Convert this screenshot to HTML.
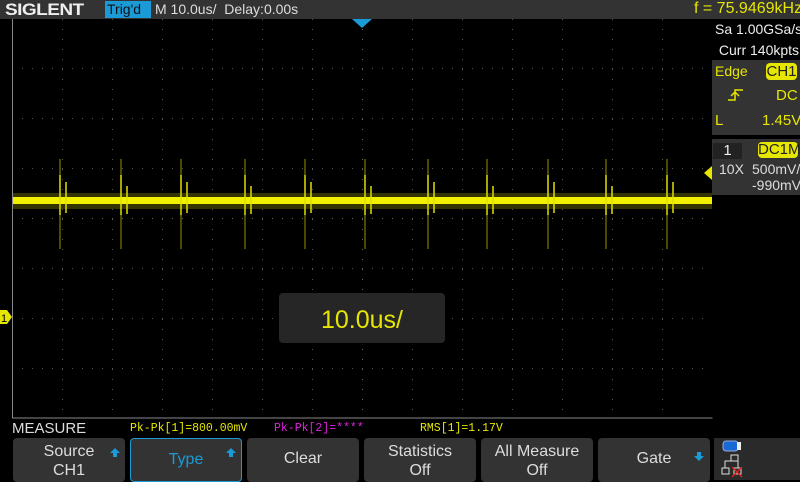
<!DOCTYPE html>
<html><head><style>
body{margin:0;width:800px;height:480px;background:#000;overflow:hidden;position:relative;font-family:"Liberation Sans",sans-serif}
.a{position:absolute;white-space:nowrap}
.btn{position:absolute;top:438px;height:44px;width:112px;background:#333;border-radius:4px;color:#ddd;font-size:16px;text-align:center;line-height:19px;box-sizing:border-box}
</style></head><body>
<div class="a" style="left:0;top:0;width:800px;height:19px;background:#333"></div>
<div class="a" style="left:5px;top:0px;font-size:17px;font-weight:bold;color:#eee;letter-spacing:-0.5px;transform:scaleX(1.12);transform-origin:left">SIGLENT</div>
<div class="a" style="left:105px;top:1px;width:44px;height:17px;background:#1a9ad6;color:#111;font-size:14px;line-height:17px;padding-left:2px">Trig'd</div>
<div class="a" style="left:155px;top:1px;color:#ddd;font-size:14px">M 10.0us/&nbsp; Delay:0.00s</div>
<div class="a" style="left:694px;top:0px;color:#e6e600;font-size:16px">f = 75.9469kHz</div>
<svg class="a" style="left:0;top:0" width="800" height="480">
<g stroke="#555" stroke-width="1" stroke-dasharray="1 9">
<path d="M62.5 19V418M112.5 19V418M162.5 19V418M212.5 19V418M262.5 19V418M312.5 19V418M412.5 19V418M462.5 19V418M512.5 19V418M562.5 19V418M612.5 19V418M662.5 19V418"/>
<path d="M12 68.5H712M12 118.5H712M12 168.5H712M12 268.5H712M12 318.5H712M12 368.5H712"/>
</g>
<g stroke="#666" stroke-dasharray="1 9"><path d="M362.5 19V418M12 218.5H712"/></g>
<path d="M12.5 19V418H712.5" stroke="#888" fill="none"/>
<path d="M352 19h20l-10 9z" fill="#1a9ad6"/>
<path d="M0 310h7l5 7-5 7H0z" fill="#e6e600"/>
<text x="1" y="322" font-size="11" fill="#000" font-family="Liberation Sans">1</text>
<path d="M712 166l-8 7 8 7z" fill="#e6e600"/>
<rect x="13" y="193" width="699" height="16" fill="#4a4a00" opacity="0.7"/>
<rect x="13" y="197" width="699" height="7" fill="#f0f000"/>
<g stroke="#b8b800" stroke-width="0.8">
<path d="M60 159V249M121 159V249M181 159V249M245 159V249M305 159V249M365 159V249M428 159V249M487 159V249M548 159V249M606 159V249M667 159V249"/>
</g>
<g stroke="#e0e000" stroke-width="1.5">
<path d="M60 175V215M66 182V213M121 175V215M127 186V214M181 175V215M187 182V213M245 175V215M251 186V214M305 175V215M311 182V213M365 175V215M371 186V214M428 175V215M434 182V213M487 175V215M493 186V214M548 175V215M554 182V213M606 175V215M612 186V214M667 175V215M673 182V213"/>
</g>
<rect x="279" y="293" width="166" height="50" rx="4" fill="#262626"/>
<text x="362" y="328" text-anchor="middle" font-size="25" fill="#e6e600" font-family="Liberation Sans">10.0us/</text>
</svg>
<div class="a" style="left:713px;top:19px;width:87px;height:40px;background:#000;color:#eee;font-size:14px;line-height:21px;padding-left:2px">Sa 1.00GSa/s<br>&nbsp;Curr 140kpts</div>
<div class="a" style="left:712px;top:60px;width:88px;height:75px;background:#333"></div>
<div class="a" style="left:715px;top:63px;color:#e6e600;font-size:14px">Edge</div>
<div class="a" style="left:766px;top:63px;width:31px;height:17px;background:#e6e600;color:#222;font-size:15px;line-height:17px;text-align:center;border-radius:4px">CH1</div>
<svg class="a" style="left:728px;top:88px" width="16" height="14"><path d="M0 12H7V2H15M3 8l4-4 4 4" stroke="#e6e600" stroke-width="1.5" fill="none"/></svg>
<div class="a" style="left:776px;top:87px;color:#e6e600;font-size:15px">DC</div>
<div class="a" style="left:715px;top:112px;color:#e6e600;font-size:15px">L</div>
<div class="a" style="left:762px;top:112px;color:#e6e600;font-size:15px">1.45V</div>
<div class="a" style="left:712px;top:139px;width:88px;height:56px;background:#333"></div>
<div class="a" style="left:713px;top:143px;width:29px;height:16px;background:#222;color:#eee;font-size:15px;text-align:center;line-height:16px">1</div>
<div class="a" style="left:758px;top:142px;width:40px;height:16px;background:#e6e600;color:#222;font-size:15px;line-height:16px;text-align:center;border-radius:4px">DC1M</div>
<div class="a" style="left:719px;top:161px;color:#ddd;font-size:14px">10X</div>
<div class="a" style="left:752px;top:161px;color:#ddd;font-size:14px">500mV/</div>
<div class="a" style="left:752px;top:177px;color:#ddd;font-size:14px">-990mV</div>
<div class="a" style="left:12px;top:420px;color:#ddd;font-size:15px">MEASURE</div>
<div class="a" style="left:130px;top:422px;color:#e6e600;font-size:11.5px;font-family:'Liberation Mono',monospace">Pk-Pk[1]=800.00mV</div>
<div class="a" style="left:274px;top:422px;color:#e020e0;font-size:11.5px;font-family:'Liberation Mono',monospace">Pk-Pk[2]=****</div>
<div class="a" style="left:420px;top:422px;color:#e6e600;font-size:11.5px;font-family:'Liberation Mono',monospace">RMS[1]=1.17V</div>
<div class="btn" style="left:13px;padding-top:4px">Source<br>CH1</div>
<div class="btn" style="left:130px;border:1px solid #1a9ad6;color:#1a9ad6;line-height:42px">Type</div>
<div class="btn" style="left:247px;line-height:42px">Clear</div>
<div class="btn" style="left:364px;padding-top:4px">Statistics<br>Off</div>
<div class="btn" style="left:481px;padding-top:4px">All Measure<br>Off</div>
<div class="btn" style="left:598px;line-height:42px">Gate</div>
<svg class="a" style="left:0;top:438px" width="800" height="42">
<path d="M115 10l-5 5h3v4h4v-4H120z" fill="#1a9ad6"/>
<path d="M231 10l-5 5h3v4h4v-4H236z" fill="#1a9ad6"/>
<path d="M699 23l-5-5h3v-4h4v4H704z" fill="#1a9ad6"/>
<rect x="714" y="0" width="86" height="42" fill="#2a2a2a"/>
<rect x="723" y="3" width="15" height="10" rx="3" fill="#1a6ad6" stroke="#9ad" stroke-width="1"/>
<rect x="737" y="4" width="4" height="8" fill="#eee"/>
<path d="M731 23v-6h7v6M725 30v-7h13v7M722 30h7v6h-7zM734 30h7v6h-7z" stroke="#ddd" fill="none"/>
<path d="M732 29l10 10M742 29l-10 10" stroke="#e02020" stroke-width="1.3"/>
</svg>
</body></html>
